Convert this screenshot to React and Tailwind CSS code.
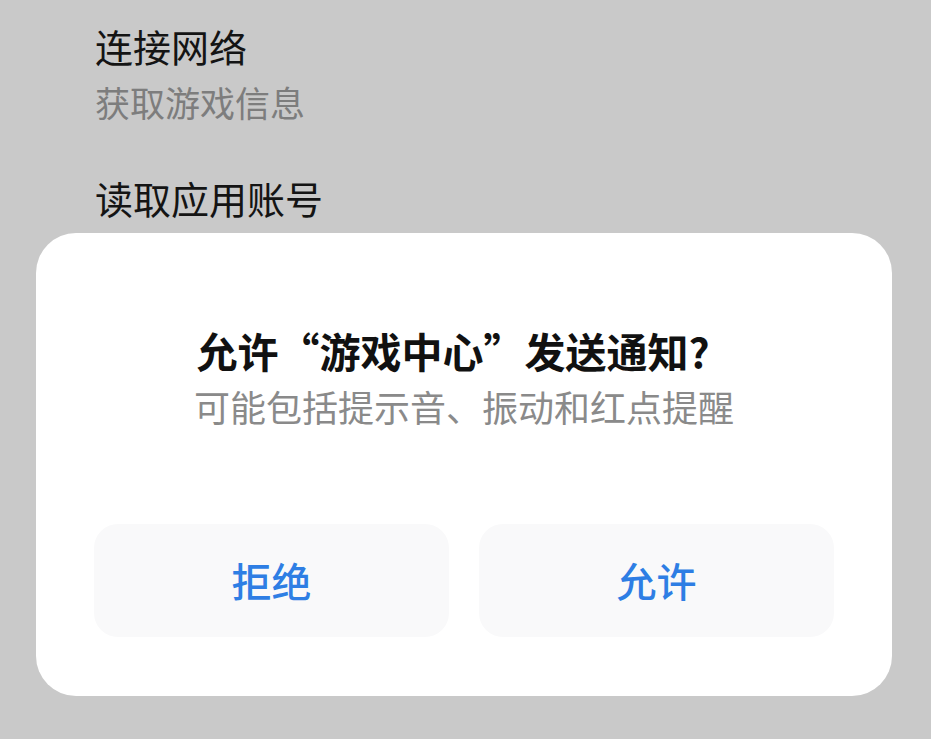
export default function App() {
  const font = { fontFamily: '"Noto Sans CJK SC", "Noto Sans", sans-serif' };

  return (
    <div className="h-[739px] w-[931px] overflow-hidden bg-[#c9c9c9]" style={font}>
      <div className="pl-[95px] pt-[18px]">
        <p className="text-[38px] leading-[56px] text-[#141414]">连接网络</p>
        <p className="text-[35px] leading-[56px] text-[#7d7d7d]">获取游戏信息</p>
        <p className="mt-[40px] text-[38px] leading-[56px] text-[#141414]">读取应用账号</p>
      </div>

      <div className="ml-[36px] mr-[39px] mt-[7px] h-[463px] rounded-[40px] bg-white px-[58px]">
        <h1 className="pr-[22px] pt-[89px] text-center text-[41px] font-bold leading-[56px] text-[#111]">
          允许“游戏中心”发送通知?
        </h1>
        <p className="mt-[3px] text-center text-[36px] leading-[50px] text-[#8a8a8a]">
          可能包括提示音、振动和红点提醒
        </p>

        <div className="mt-[93px] grid grid-cols-2 gap-[30px]">
          <button className="h-[113px] rounded-[24px] bg-[#f9f9fa] pb-[2px] text-[40px] font-medium text-[#2e7ee4]">
            拒绝
          </button>
          <button className="h-[113px] rounded-[24px] bg-[#f9f9fa] pb-[2px] text-[40px] font-medium text-[#2e7ee4]">
            允许
          </button>
        </div>
      </div>
    </div>
  );
}
